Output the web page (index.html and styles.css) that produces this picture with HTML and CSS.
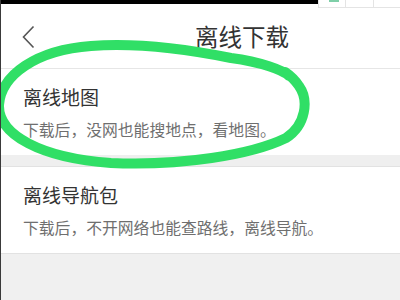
FILE: index.html
```html
<!DOCTYPE html>
<html lang="zh">
<head>
<meta charset="utf-8">
<link rel="stylesheet" href="styles.css">
</head>
<body>
<div class="screen">
  <div class="strip">
    <div class="strip-black"></div>
    <div class="tabs">
      <div class="tab"><span class="tab-mark"></span></div>
      <div class="tab"></div>
      <div class="tab"></div>
    </div>
  </div>
  <header class="header">
    <svg class="back" width="13" height="24" viewBox="0 0 13 24"><path d="M11.5 1.5 L1.5 12 L11.5 22.5" fill="none" stroke="#555" stroke-width="1.6"/></svg>
    <h1 class="title">离线下载</h1>
  </header>
  <section class="item">
    <div class="item-title">离线地图</div>
    <div class="item-desc">下载后，没网也能搜地点，看地图。</div>
  </section>
  <div class="band"></div>
  <section class="item item-last">
    <div class="item-title">离线导航包</div>
    <div class="item-desc">下载后，不开网络也能查路线，离线导航。</div>
  </section>
  <div class="rest"></div>
  <svg class="mark" width="400" height="300" viewBox="0 0 400 300">
    <path d="M288 76 C 282 70, 260 62, 230 58 C 190 50, 140 42, 90 46 C 35 50, 0 75, -2 105 C -3 135, 40 158, 110 163 C 180 166, 250 155, 285 138 C 305 125, 308 100, 298 86 C 294 80, 290 76, 284 72" fill="none" stroke="#30df66" stroke-width="10" stroke-linecap="round" stroke-linejoin="round"/>
  </svg>
</div>
</body>
</html>
```
FILE: styles.css
```css
html, body {
  margin: 0;
  padding: 0;
  background: #f0f0f0;
}
.screen {
  position: relative;
  width: 399px;
  height: 300px;
  overflow: hidden;
  border-left: 1px solid #3a3a3a;
  background: #f0f0f0;
  font-family: "Noto Sans CJK SC", "Noto Sans", sans-serif;
}
.strip {
  display: flex;
  align-items: flex-start;
  height: 4px;
  background: #fff;
  overflow: visible;
  position: relative;
  z-index: 1;
}
.strip-black {
  flex: 1;
  height: 4px;
  background: #000;
}
.tabs {
  display: flex;
  width: 82px;
  height: 7px;
  border-bottom: 1px solid #e4e4e4;
  background: #fff;
}
.tab {
  flex: 1;
  border-left: 1px solid #e4e4e4;
  position: relative;
}
.tab-mark {
  display: block;
  width: 10px;
  height: 2px;
  margin-left: 10px;
  background: #7fcfa8;
}
.header {
  display: flex;
  align-items: center;
  background: #fff;
  border-bottom: 1px solid #e6e6e6;
  box-sizing: border-box;
  height: 65px;
  padding-left: 21px;
}
.back {
  display: block;
  margin-top: 2px;
}
.title {
  margin: 0 0 0 160px;
  font-size: 23.5px;
  font-weight: normal;
  color: #333;
  line-height: 30px;
}
.item {
  display: flex;
  flex-direction: column;
  background: #fff;
  height: 86px;
  box-sizing: border-box;
  padding: 16px 22px 0;
}
.item-title {
  font-size: 19px;
  line-height: 24px;
  color: #333;
}
.item-desc {
  margin-top: 11px;
  font-size: 15.8px;
  line-height: 20px;
  color: #6f6f6f;
}
.band {
  height: 11px;
  background: #efefef;
  border-bottom: 1px solid #e2e2e2;
}
.item-last {
  border-bottom: 1px solid #e2e2e2;
  height: 87px;
}
.rest {
  height: 60px;
  background: #f0f0f0;
}
.mark {
  position: absolute;
  left: 0;
  top: 0;
  pointer-events: none;
}
```
